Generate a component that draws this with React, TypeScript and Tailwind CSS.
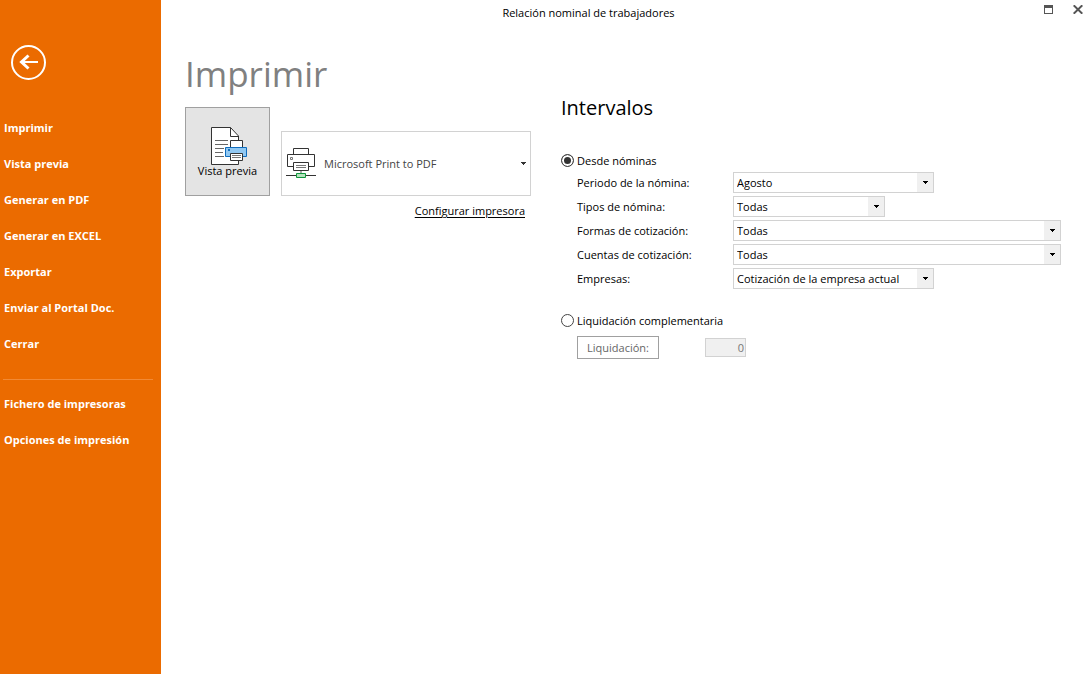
import type { ReactNode } from "react";

const primaryItems = [
  "Imprimir",
  "Vista previa",
  "Generar en PDF",
  "Generar en EXCEL",
  "Exportar",
  "Enviar al Portal Doc.",
  "Cerrar",
];
const secondaryItems = ["Fichero de impresoras", "Opciones de impresión"];

const filters = [
  { id: "periodo", label: "Periodo de la nómina:", value: "Agosto", width: "w-[201px]" },
  { id: "tipos", label: "Tipos de nómina:", value: "Todas", width: "w-[152px]" },
  { id: "formas", label: "Formas de cotización:", value: "Todas", width: "flex-1" },
  { id: "cuentas", label: "Cuentas de cotización:", value: "Todas", width: "flex-1" },
  { id: "empresas", label: "Empresas:", value: "Cotización de la empresa actual", width: "w-[201px]" },
];

function Caret() {
  return (
    <svg width="5" height="3" viewBox="0 0 5 3" shapeRendering="crispEdges" fill="currentColor" aria-hidden="true">
      <path d="M0 0h5v1H4v1H3v1H2V2H1V1H0z" />
    </svg>
  );
}

function PreviewIcon() {
  return (
    <svg width="37" height="38" viewBox="0 0 37 38" fill="none" aria-hidden="true">
      <path d="M.5.5h19l8 8.500v28.500H.5z" fill="#fff" stroke="#333" />
      <path d="M19.500.5v9h8" stroke="#333" />
      <path d="M4 13.500h13M4 17.500h13M4 21.500h9M4 25.500h8M4 29.500h9" stroke="#666" />
      <path d="M19.500 20.500v-7h12v7" fill="#fff" stroke="#333" />
      <path d="M14.500 20.500h21v9h-21z" fill="#91c8f2" stroke="#0f6cbd" />
      <path d="M17 22h2v2h-2z" fill="#0f6cbd" />
      <path d="M19.500 26.500h12v7h-12z" fill="#fff" stroke="#333" />
      <path d="M21 28.500h9M21 30.500h9" stroke="#777" />
    </svg>
  );
}

function PrinterIcon() {
  return (
    <svg width="30" height="30" viewBox="0 0 30 30" fill="none" aria-hidden="true">
      <path d="M7.500 6.500v-6h15v6" fill="#fff" stroke="#333" />
      <path d="M1.500 6.500h27v12h-27z" fill="#fff" stroke="#333" />
      <path d="M4.500 9.500h2v2h-2z" stroke="#777" />
      <path d="M7.500 14.500h15v8h-15z" fill="#fff" stroke="#333" />
      <path d="M10 17.500h10M10 19.500h10" stroke="#777" />
      <path d="M15 23v2" stroke="#aaa" strokeWidth="2" />
      <path d="M0 27.500h30" stroke="#333" />
      <path d="M10.500 25.500h9v4h-9z" fill="#b5e3bd" stroke="#10963c" />
    </svg>
  );
}

function NavItem({ children }: { children: ReactNode }) {
  return (
    <li>
      <button type="button" className="flex h-9 w-full items-center pl-1 text-left">
        {children}
      </button>
    </li>
  );
}

const radioClass =
  "m-0 size-[13px] shrink-0 appearance-none rounded-full border border-[#444] bg-white checked:bg-[#333] checked:shadow-[inset_0_0_0_2px_white]";

export default function App() {
  return (
    <div className="flex min-h-screen bg-white font-['Open_Sans','Noto_Sans',sans-serif] text-[11px] leading-4 text-black">
      <aside className="w-[161px] shrink-0 bg-[#eb6b00] pt-[45px] text-white">
        <button type="button" aria-label="Volver" className="ml-[11px] block">
          <svg width="35" height="35" viewBox="0 0 35 35" fill="none" stroke="#fff" aria-hidden="true">
            <circle cx="17.500" cy="17.500" r="16.500" strokeWidth="2" />
            <path d="M10.500 17H27" strokeWidth="2" />
            <path d="M17.500 10.500L10.500 17l7 6.500" strokeWidth="3" />
          </svg>
        </button>
        <nav className="pt-[30px] font-bold">
          <ul>
            {primaryItems.map((item) => (
              <NavItem key={item}>{item}</NavItem>
            ))}
          </ul>
          <hr className="mt-[17px] mr-2 mb-1.5 ml-[3px] border-[#f28a35]" />
          <ul>
            {secondaryItems.map((item) => (
              <NavItem key={item}>{item}</NavItem>
            ))}
          </ul>
        </nav>
      </aside>

      <div className="flex min-w-0 flex-1 flex-col">
        <header className="flex h-[26px] items-center">
          <p className="flex-1 text-center">Relación nominal de trabajadores</p>
          <div className="flex h-full w-[76px] items-start justify-end gap-5 pt-[5px] pr-[9px]">
            <button type="button" aria-label="Maximizar">
              <svg width="9" height="9" viewBox="0 0 9 9" fill="#555" shapeRendering="crispEdges" aria-hidden="true">
                <path fillRule="evenodd" d="M0 0h9v9H0zM1 3v5h7V3z" />
              </svg>
            </button>
            <button type="button" aria-label="Cerrar ventana">
              <svg width="10" height="9" viewBox="0 0 10 9" stroke="#555" strokeWidth="2" aria-hidden="true">
                <path d="M.7.3l8.600 8.400M9.300.3L.7 8.700" />
              </svg>
            </button>
          </div>
        </header>

        <main className="flex gap-[30px] pt-[21px] pr-[31px] pl-6">
          <section className="w-[346px] shrink-0">
            <h1 className="text-[35px] leading-[54px] text-[#808080]">Imprimir</h1>
            <div className="mt-1.5 flex items-end gap-[11px]">
              <button
                type="button"
                className="flex h-[89px] w-[85px] shrink-0 flex-col items-center border border-[#a0a0a0] bg-[#e4e4e4] pt-[19px]"
              >
                <span className="pl-1">
                  <PreviewIcon />
                </span>
                <span className="leading-3 whitespace-nowrap">Vista previa</span>
              </button>
              <div className="grid h-[65px] flex-1 items-center border border-[#d2d2d2]">
                <span className="pointer-events-none z-10 col-start-1 row-start-1 pl-1 pb-0.5">
                  <PrinterIcon />
                </span>
                <select
                  aria-label="Impresora"
                  className="col-start-1 row-start-1 h-full w-full appearance-none bg-transparent pl-[42px] text-[#444]"
                >
                  <option>Microsoft Print to PDF</option>
                </select>
                <span className="pointer-events-none col-start-1 row-start-1 justify-self-end pr-1 text-[#333]">
                  <Caret />
                </span>
              </div>
            </div>
            <div className="mt-[7px] pr-1.5 text-right">
              <a href="#configurar" className="underline underline-offset-2">
                Configurar impresora
              </a>
            </div>
          </section>

          <form className="min-w-0 flex-1 pt-[47px]">
            <h2 className="text-xl leading-7">Intervalos</h2>
            <div className="mt-[27px] flex h-[23px] items-center gap-[3px]">
              <input type="radio" id="desde" name="origen" defaultChecked className={radioClass} />
              <label htmlFor="desde">Desde nóminas</label>
            </div>
            <div className="flex flex-col gap-[3px] pl-4">
              {filters.map((f) => (
                <div key={f.id} className="flex h-[21px] items-center">
                  <label htmlFor={f.id} className="w-[156px] shrink-0">
                    {f.label}
                  </label>
                  <div className={`grid h-full border border-[#d2d2d2] ${f.width}`}>
                    <select
                      id={f.id}
                      className="col-start-1 row-start-1 w-full appearance-none bg-white pr-4 pl-[3px]"
                    >
                      <option>{f.value}</option>
                    </select>
                    <span className="pointer-events-none col-start-1 row-start-1 flex w-4 items-center justify-center justify-self-end bg-[#f0f0f0]">
                      <Caret />
                    </span>
                  </div>
                </div>
              ))}
            </div>
            <div className="mt-5 flex h-[23px] items-center gap-[3px]">
              <input type="radio" id="complementaria" name="origen" className={radioClass} />
              <label htmlFor="complementaria">Liquidación complementaria</label>
            </div>
            <div className="mt-1 flex items-center gap-[46px] pl-4">
              <button type="button" className="h-[23px] w-[82px] border border-[#a0a0a0] text-[#666]">
                Liquidación:
              </button>
              <input
                type="text"
                aria-label="Número de liquidación"
                defaultValue="0"
                disabled
                className="h-[19px] w-[41px] border border-[#d2d2d2] bg-[#f0f0f0] pr-px text-right text-[#777]"
              />
            </div>
          </form>
        </main>
      </div>
    </div>
  );
}
